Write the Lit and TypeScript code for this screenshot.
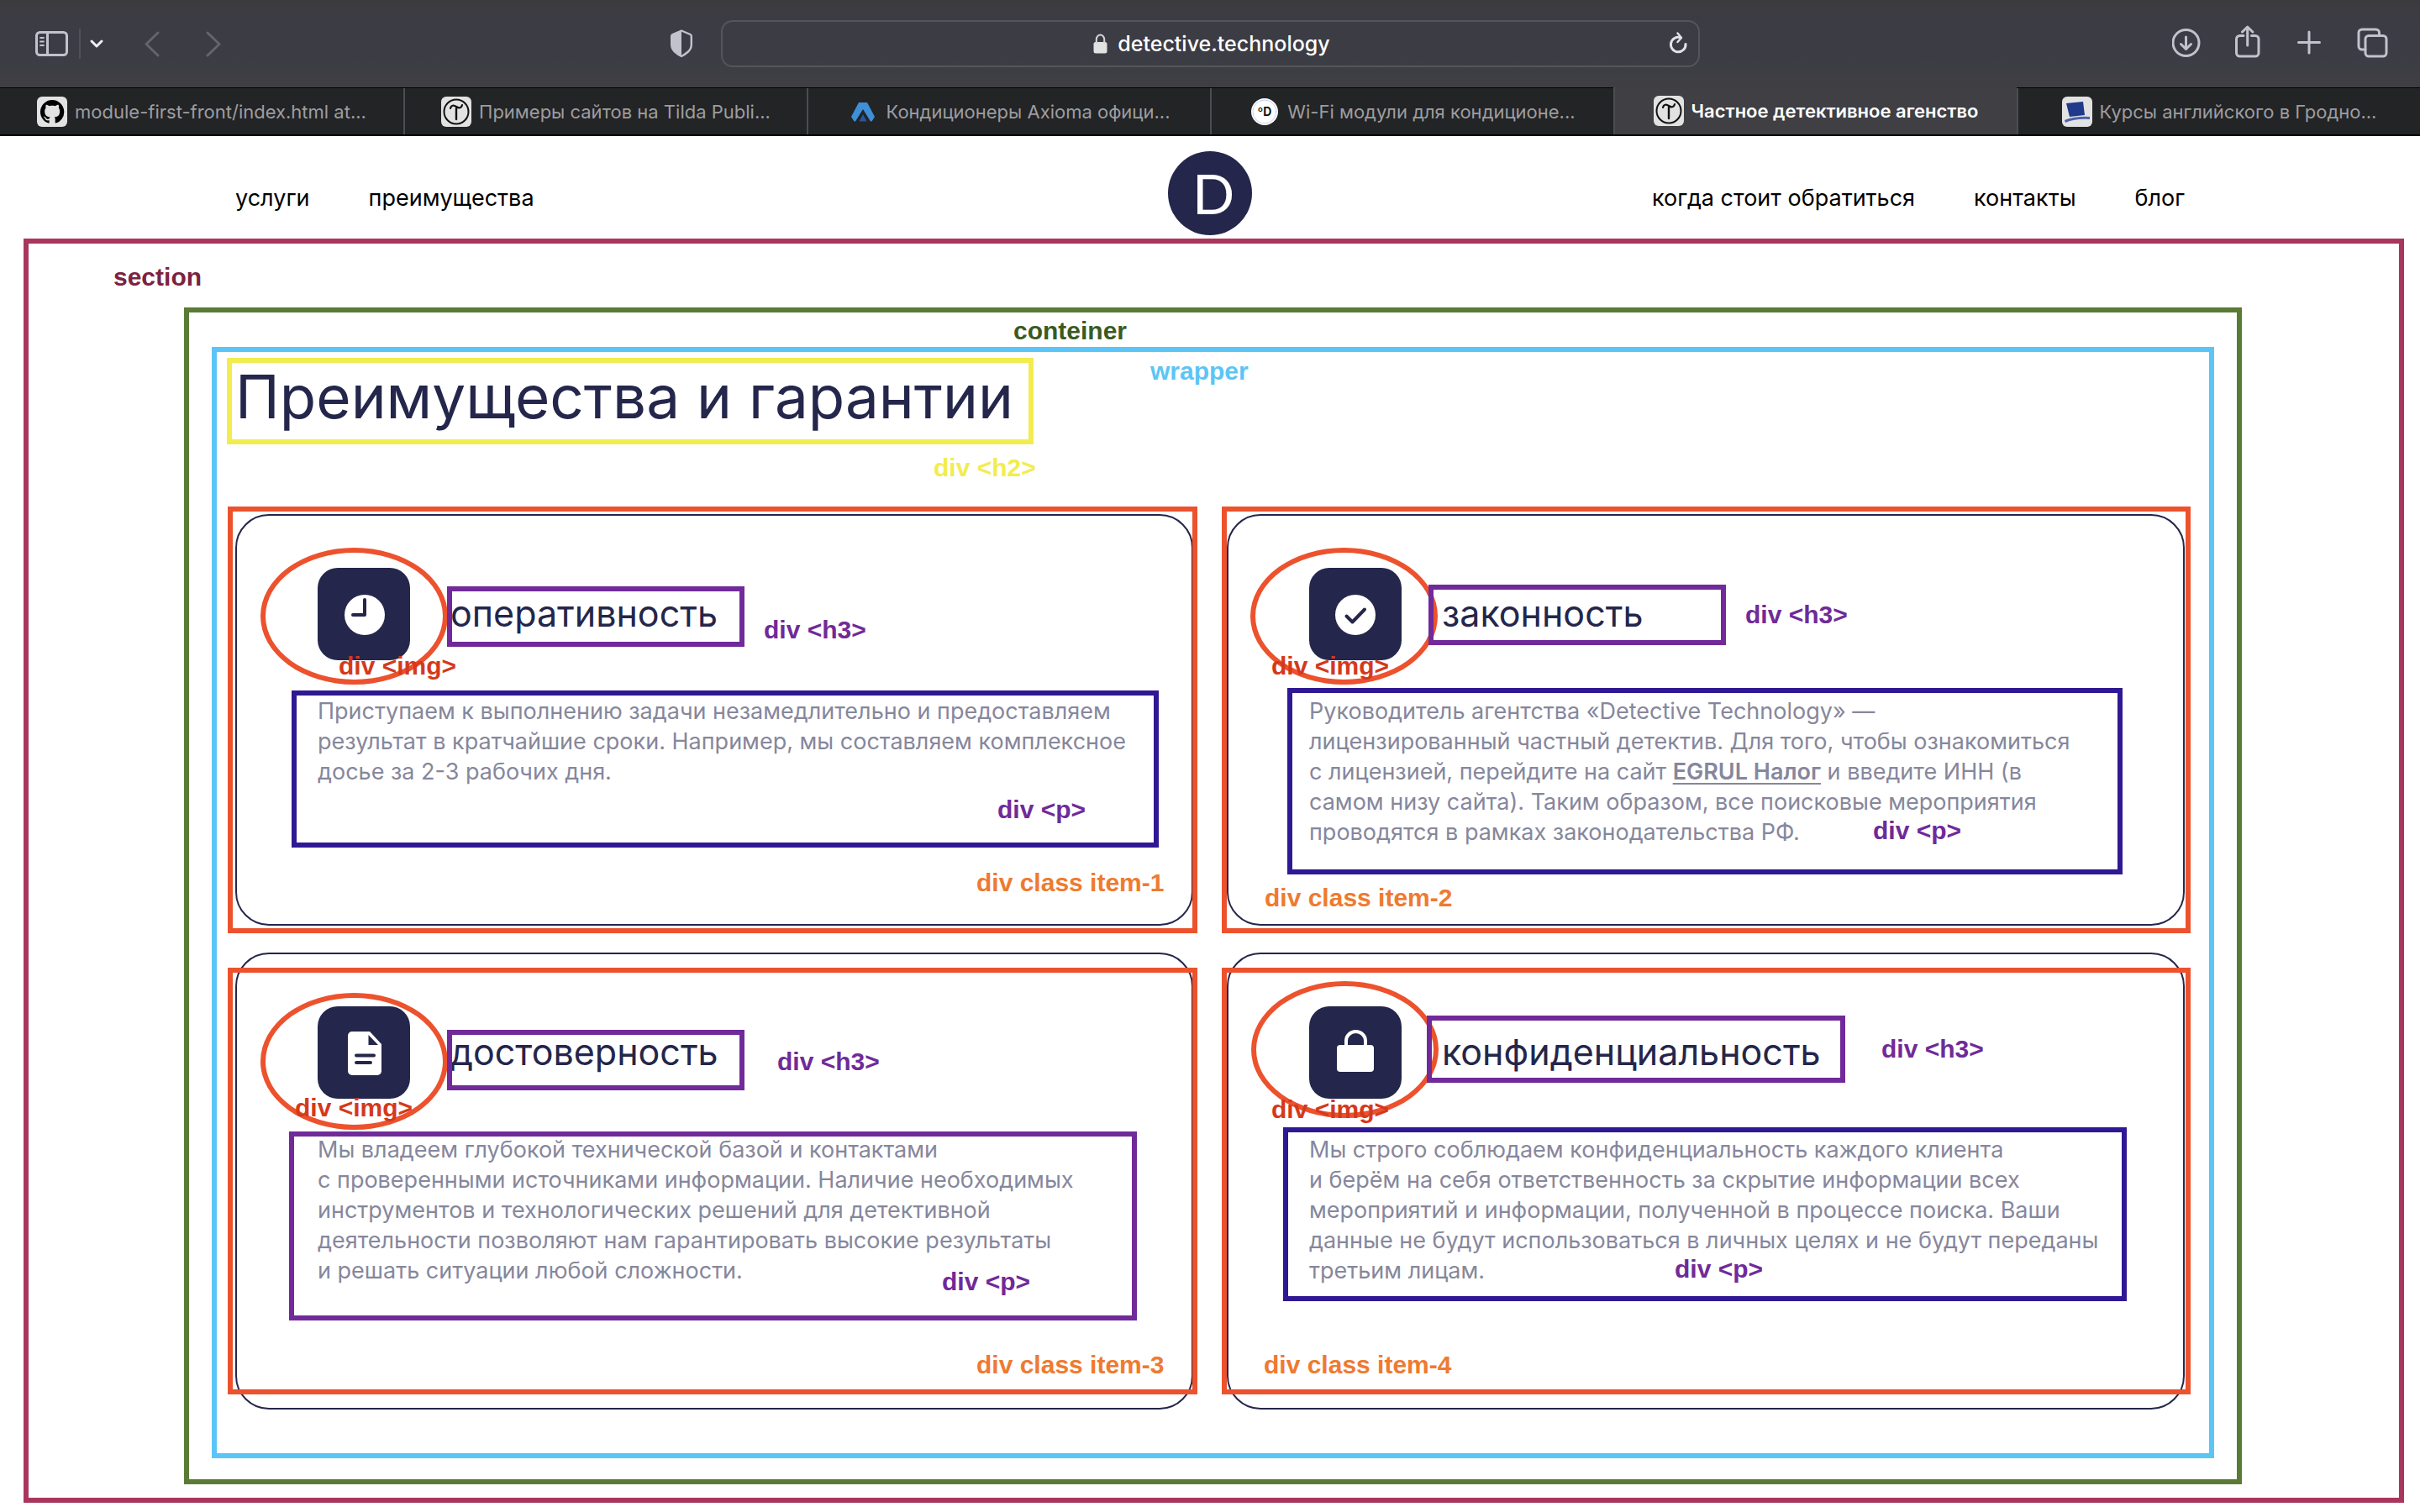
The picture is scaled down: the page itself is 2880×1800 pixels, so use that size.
import { LitElement, html, css, svg, TemplateResult } from "lit";
import { customElement, property } from "lit/decorators.js";

interface Advantage {
  id: number;
  title: string;
  icon: TemplateResult;
  lines: (string | TemplateResult)[];
}

const clockIcon = svg`
  <circle cx="56" cy="56" r="24" fill="#fff"/>
  <path d="M56 38V56H42" fill="none" stroke="#24264b" stroke-width="4" stroke-linecap="round" stroke-linejoin="round"/>`;

const checkIcon = svg`
  <circle cx="55" cy="56" r="24" fill="#fff"/>
  <path d="M44.500 57.500L51.500 64.500L66 49.500" fill="none" stroke="#24264b" stroke-width="4" stroke-linecap="round" stroke-linejoin="round"/>`;

const documentIcon = svg`
  <path d="M41 30H62L76 45V77a5 5 0 0 1-5 5H41a5 5 0 0 1-5-5V35a5 5 0 0 1 5-5z" fill="#fff"/>
  <path d="M60.500 34V46H72z" fill="#24264b"/>
  <path d="M46 58.500H67M46 67H63" stroke="#24264b" stroke-width="4" stroke-linecap="round"/>`;

const lockIcon = svg`
  <rect x="33" y="46" width="44" height="32" rx="4" fill="#fff"/>
  <path d="M44 48V41a11.500 11 0 0 1 23 0v7" fill="none" stroke="#fff" stroke-width="4"/>`;

const advantages: Advantage[] = [
  {
    id: 1,
    title: "оперативность",
    icon: clockIcon,
    lines: [
      "Приступаем к выполнению задачи незамедлительно и предоставляем",
      "результат в кратчайшие сроки. Например, мы составляем комплексное",
      "досье за 2-3 рабочих дня.",
    ],
  },
  {
    id: 2,
    title: "законность",
    icon: checkIcon,
    lines: [
      "Руководитель агентства «Detective Technology» —",
      "лицензированный частный детектив. Для того, чтобы ознакомиться",
      html`с лицензией, перейдите на сайт <a class="source" href="#egrul">EGRUL Налог</a> и введите ИНН (в`,
      "самом низу сайта). Таким образом, все поисковые мероприятия",
      "проводятся в рамках законодательства РФ.",
    ],
  },
  {
    id: 3,
    title: "достоверность",
    icon: documentIcon,
    lines: [
      "Мы владеем глубокой технической базой и контактами",
      "с проверенными источниками информации. Наличие необходимых",
      "инструментов и технологических решений для детективной",
      "деятельности позволяют нам гарантировать высокие результаты",
      "и решать ситуации любой сложности.",
    ],
  },
  {
    id: 4,
    title: "конфиденциальность",
    icon: lockIcon,
    lines: [
      "Мы строго соблюдаем конфиденциальность каждого клиента",
      "и берём на себя ответственность за скрытие информации всех",
      "мероприятий и информации, полученной в процессе поиска. Ваши",
      "данные не будут использоваться в личных целях и не будут переданы",
      "третьим лицам.",
    ],
  },
];

const tildaMark = svg`
  <rect width="36" height="36" rx="6" fill="#e2e2e2"/>
  <circle cx="18" cy="18" r="14.500" fill="none" stroke="#111" stroke-width="2"/>
  <path d="M11 14c1-4 4-4 7-2s6 2 7-2" fill="none" stroke="#111" stroke-width="2.200"/>
  <path d="M18 14V27" stroke="#111" stroke-width="2.400"/>`;

const githubMark = svg`
  <rect width="36" height="36" rx="6" fill="#e2e2e2"/>
  <path transform="translate(4 4) scale(1.770)" fill="#000" d="M8 0C3.580 0 0 3.580 0 8c0 3.540 2.290 6.530 5.470 7.590.4.070.55-.17.55-.38 0-.19-.01-.82-.01-1.490-2.010.37-2.530-.49-2.690-.94-.09-.23-.48-.94-.82-1.130-.28-.15-.68-.52-.01-.53.63-.01 1.080.58 1.230.82.72 1.210 1.870.87 2.330.66.07-.52.28-.87.51-1.070-1.780-.2-3.640-.89-3.640-3.950 0-.87.31-1.590.82-2.150-.08-.2-.36-1.020.08-2.120 0 0 .67-.21 2.200.82.64-.18 1.320-.27 2-.27s1.360.09 2 .27c1.530-1.040 2.200-.82 2.200-.82.44 1.100.16 1.920.08 2.120.51.56.82 1.270.82 2.150 0 3.070-1.870 3.750-3.650 3.950.29.25.54.73.54 1.480 0 1.070-.01 1.930-.01 2.200 0 .21.15.46.55.38A8.010 8.010 0 0 0 16 8c0-4.420-3.580-8-8-8z"/>`;

const axiomaMark = svg`
  <path d="M13 7H23L32 24L28.500 29.500H27L18 15L9 29.500H7.500L4 24z" fill="#3e8fd8"/>
  <path d="M18 21L22.500 29.500H13.500z" fill="#2a559f"/>`;

const degreeMark = svg`
  <circle cx="18" cy="18" r="16" fill="#fff"/>
  <circle cx="18" cy="18" r="14" fill="none" stroke="#bcd3ff" stroke-width="1"/>
  <text x="18" y="23" text-anchor="middle" font-family="Inter, sans-serif" font-weight="700" font-size="14" fill="#111">ºD</text>`;

const hatMark = svg`
  <rect width="36" height="36" rx="6" fill="#e2e2e2"/>
  <path d="M5 8L25 6L27 22L9 24z" fill="#20398a"/>
  <path d="M3 28Q16 23 33 24V27Q16 26 4 31z" fill="#4c62a6"/>`;

const tabs = [
  { title: "module-first-front/index.html at...", mark: githubMark, active: false },
  { title: "Примеры сайтов на Tilda Publi...", mark: tildaMark, active: false },
  { title: "Кондиционеры Axioma офици...", mark: axiomaMark, active: false },
  { title: "Wi-Fi модули для кондиционе...", mark: degreeMark, active: false },
  { title: "Частное детективное агенство", mark: tildaMark, active: true },
  { title: "Курсы английского в Гродно...", mark: hatMark, active: false },
];

@customElement("browser-chrome")
export class BrowserChrome extends LitElement {
  static styles = css`
    :host {
      display: block;
      font-family: Inter, "Liberation Sans", sans-serif;
    }
    button {
      display: flex;
      padding: 0;
      border: 0;
      background: none;
      color: #c3c2cc;
      font: inherit;
    }
    svg {
      display: block;
      fill: none;
      stroke: currentColor;
      stroke-width: 3;
      stroke-linecap: round;
      stroke-linejoin: round;
    }
    .toolbar {
      display: grid;
      grid-template-columns: 1fr minmax(0, 1165px) 1fr;
      align-items: center;
      height: 104px;
      background: linear-gradient(#3b3b3f, #3c3c45 30%, #3c3c45 65%, #3f3f43);
    }
    .side {
      display: flex;
      align-items: center;
    }
    .left {
      padding: 0 32px 0 40px;
    }
    .right {
      justify-content: flex-end;
      gap: 32px;
      padding-right: 37px;
    }
    .divider {
      width: 2px;
      height: 36px;
      margin: 0 10px 0 11px;
      background: #515158;
    }
    .history {
      display: flex;
      gap: 48px;
      margin-left: 46px;
      flex: 1;
    }
    .history button {
      color: #64646c;
    }
    .menu {
      color: #f0f0f4;
    }
    .address {
      display: flex;
      align-items: center;
      box-sizing: border-box;
      height: 56px;
      padding: 0 12px 0 40px;
      border: 2px solid #54545a;
      border-radius: 14px;
      color: #fff;
      font-size: 25px;
      font-weight: 500;
    }
    .host {
      display: flex;
      flex: 1;
      align-items: center;
      justify-content: center;
      gap: 12px;
    }
    .address button {
      color: #e2e2e6;
    }
    .tabs {
      display: grid;
      grid-template-columns: repeat(6, 1fr);
      height: 55px;
      border-top: 1px solid #000;
      border-bottom: 2px solid #000;
      background: #000;
    }
    .tab {
      justify-content: center;
      align-items: center;
      gap: 9px;
      min-width: 0;
      border-left: 2px solid #4c4c52;
      background: #232426;
      color: #9d9da0;
      font-size: 22px;
      white-space: nowrap;
    }
    .tab:first-child {
      border-left: 0;
    }
    .tab.active {
      margin-top: -1px;
      background: #3f3f44;
      color: #fff;
      font-weight: 600;
    }
    .mark {
      stroke: none;
    }
  `;

  render() {
    return html`
      <div class="toolbar">
        <div class="side left">
          <button aria-label="Sidebar">
            <svg width="43" height="36" viewBox="0 0 43 36">
              <rect x="3.500" y="4.500" width="36" height="27" rx="4"/>
              <path d="M16.500 5V31"/>
              <path d="M8 11H12M8 15.500H12M8 20H12" stroke-width="1.800"/>
            </svg>
          </button>
          <span class="divider"></span>
          <button class="menu" aria-label="Tab groups">
            <svg width="18" height="18" viewBox="0 0 18 18" stroke-width="3.500"><path d="M3 6L9 12L15 6"/></svg>
          </button>
          <div class="history">
            <button aria-label="Back">
              <svg width="24" height="36" viewBox="0 0 24 36"><path d="M18 5L4 18.500L18 32"/></svg>
            </button>
            <button aria-label="Forward">
              <svg width="24" height="36" viewBox="0 0 24 36"><path d="M5 5L19 18.500L5 32"/></svg>
            </button>
          </div>
          <button aria-label="Privacy report">
            <svg width="30" height="36" viewBox="0 0 30 36">
              <path d="M15 2.500L25.500 7Q26.800 7.800 26.800 9V19Q26.800 24 23 27.500Q19 31 15 33Q11 31 7 27.500Q3.200 24 3.200 19V9Q3.200 7.800 4.500 7z" stroke-width="2.400"/>
              <path d="M15 2.500V33Q11 31 7 27.500Q3.200 24 3.200 19V9Q3.200 7.800 4.500 7z" fill="currentColor" stroke="none"/>
            </svg>
          </button>
        </div>
        <div class="address">
          <span class="host">
            <svg width="17" height="24" viewBox="0 0 17 24">
              <rect x="0.500" y="10" width="16" height="13.500" rx="2.500" fill="#e2e2e2" stroke="none"/>
              <path d="M3.800 11V7a4.700 5.500 0 0 1 9.400 0v4" stroke="#d6d6da" stroke-width="2"/>
            </svg>
            <span>detective.technology</span>
          </span>
          <button aria-label="Reload">
            <svg width="24" height="28" viewBox="0 0 24 28" stroke-width="2.400">
              <path d="M21 14.500a8.800 8.800 0 1 1-6-7.800"/>
              <path d="M11.500 1.500L16 7L11.500 12" stroke-width="2.400"/>
            </svg>
          </button>
        </div>
        <div class="side right">
          <button aria-label="Downloads">
            <svg width="38" height="44" viewBox="0 0 38 44" stroke-width="2.600">
              <circle cx="16" cy="21" r="15.500" transform="translate(0.500 0)"/>
              <path d="M16.500 14V28M10.500 22.500L16.500 28.500L22.500 22.500"/>
            </svg>
          </button>
          <button aria-label="Share">
            <svg width="42" height="44" viewBox="0 0 42 44" stroke-width="2.600">
              <path d="M15 12.500H10.500a4 4 0 0 0-4 4V33a4 4 0 0 0 4 4H29a4 4 0 0 0 4-4V16.500a4 4 0 0 0-4-4H24.500"/>
              <path d="M19.700 24V2.500M13.500 8L19.700 2L25.900 8"/>
            </svg>
          </button>
          <button aria-label="New tab">
            <svg width="42" height="44" viewBox="0 0 42 44"><path d="M19 8V33M6.500 20.500H31.500"/></svg>
          </button>
          <button aria-label="Tab overview">
            <svg width="40" height="44" viewBox="0 0 40 44" stroke-width="2.600">
              <rect x="12" y="12.500" width="25" height="24.500" rx="4"/>
              <path d="M12 29H8a4 4 0 0 1-4-4V9a4 4 0 0 1 4-4H24.500a4 4 0 0 1 4 4V12"/>
            </svg>
          </button>
        </div>
      </div>
      <div class="tabs">
        ${tabs.map(
          (tab) => html`
            <button class="tab ${tab.active ? "active" : ""}">
              <svg class="mark" width="36" height="36" viewBox="0 0 36 36">${tab.mark}</svg>
              <span>${tab.title}</span>
            </button>
          `
        )}
      </div>
    `;
  }
}

@customElement("advantage-card")
export class AdvantageCard extends LitElement {
  @property({ attribute: false }) item!: Advantage;

  static styles = css`
    :host {
      display: block;
    }
    .item {
      position: relative;
      height: 100%;
    }
    .card {
      box-sizing: border-box;
      height: 100%;
      padding: 62px 40px 91px 96px;
      border: 2px solid #24264b;
      border-radius: 40px;
    }
    .item-3 .card,
    .item-4 .card {
      padding-bottom: 145px;
    }
    .head {
      display: flex;
      align-items: center;
      gap: 48px;
      margin-bottom: 43px;
    }
    .icon {
      display: block;
      flex: none;
      border-radius: 24px;
      background: #24264b;
    }
    h3 {
      margin: 0;
      padding-bottom: 2px;
      color: #24264b;
      font-size: 43px;
      font-weight: 400;
      line-height: 56px;
    }
    p {
      margin: 0;
      color: #86879c;
      font-size: 27px;
      line-height: 36px;
      white-space: nowrap;
    }
    .source {
      color: inherit;
      font-weight: 600;
      text-underline-offset: 4px;
    }

    .frame,
    .ring,
    .title-box,
    .text-box,
    .label {
      position: absolute;
      box-sizing: border-box;
      pointer-events: none;
    }
    .frame {
      top: -9px;
      left: -9px;
      right: -5px;
      height: 508px;
      border: 6px solid #ec522d;
    }
    .ring {
      top: 40px;
      left: 30px;
      width: 223px;
      height: 163px;
      border: 6px solid #ec522d;
      border-radius: 50%;
    }
    .title-box {
      width: 354px;
      height: 72px;
      border: 6px solid #702a99;
    }
    .text-box {
      border: 6px solid #2f1893;
    }
    .label {
      font-family: "Liberation Sans", Arial, sans-serif;
      font-size: 30px;
      font-weight: 700;
      line-height: 36px;
      white-space: nowrap;
    }
    .label-img {
      color: #d5391c;
    }
    .label-title,
    .label-text {
      color: #702a99;
    }
    .label-item {
      color: #ef7a30;
    }

    .item-1 .title-box { left: 252px; top: 86px; }
    .item-1 .text-box { left: 67px; top: 210px; width: 1032px; height: 187px; }
    .item-1 .label-img { left: 123px; top: 163px; }
    .item-1 .label-title { left: 629px; top: 120px; }
    .item-1 .label-text { left: 907px; top: 334px; }
    .item-1 .label-item { left: 882px; top: 421px; }

    .item-2 .frame { left: -6px; right: -7px; }
    .item-2 .ring { left: 28px; }
    .item-2 .title-box { left: 240px; top: 84px; }
    .item-2 .text-box { left: 72px; top: 207px; width: 994px; height: 222px; }
    .item-2 .label-img { left: 53px; top: 163px; }
    .item-2 .label-title { left: 617px; top: 102px; }
    .item-2 .label-text { left: 769px; top: 359px; }
    .item-2 .label-item { left: 45px; top: 439px; }

    .item-3 .frame { top: 18px; }
    .item-3 .ring { top: 48px; }
    .item-3 .title-box { left: 252px; top: 92px; }
    .item-3 .text-box { left: 64px; top: 213px; width: 1009px; height: 225px; border-color: #702a99; }
    .item-3 .label-img { left: 71px; top: 167px; }
    .item-3 .label-title { left: 645px; top: 112px; }
    .item-3 .label-text { left: 841px; top: 374px; }
    .item-3 .label-item { left: 882px; top: 473px; }

    .item-4 .frame { top: 18px; left: -6px; right: -7px; }
    .item-4 .ring { left: 29px; top: 34px; }
    .item-4 .title-box { left: 238px; top: 75px; width: 498px; height: 80px; }
    .item-4 .text-box { left: 67px; top: 208px; width: 1004px; height: 207px; }
    .item-4 .label-img { left: 53px; top: 169px; }
    .item-4 .label-title { left: 779px; top: 97px; }
    .item-4 .label-text { left: 533px; top: 359px; }
    .item-4 .label-item { left: 44px; top: 473px; }
  `;

  render() {
    const { id, title, icon, lines } = this.item;
    return html`
      <article class="item item-${id}">
        <div class="card">
          <div class="head">
            <svg class="icon" width="110" height="110" viewBox="0 0 110 110" aria-hidden="true">${icon}</svg>
            <h3>${title}</h3>
          </div>
          <p>${lines.map((line, i) => (i ? html`<br>${line}` : line))}</p>
        </div>
        <div class="frame"></div>
        <div class="ring"></div>
        <div class="title-box"></div>
        <div class="text-box"></div>
        <span class="label label-img">div &lt;img&gt;</span>
        <span class="label label-title">div &lt;h3&gt;</span>
        <span class="label label-text">div &lt;p&gt;</span>
        <span class="label label-item">div class item-${id}</span>
      </article>
    `;
  }
}

@customElement("app-root")
export class AppRoot extends LitElement {
  static styles = css`
    :host {
      display: block;
      background: #fff;
      font-family: Inter, "Liberation Sans", sans-serif;
    }
    .site-header {
      display: grid;
      grid-template-columns: 1fr auto 1fr;
      align-items: center;
      padding: 18px 280px 4px;
    }
    nav {
      display: flex;
      gap: 70px;
      padding-top: 12px;
      font-size: 27px;
      line-height: 36px;
    }
    nav a {
      color: #000;
      text-decoration: none;
      white-space: nowrap;
    }
    .nav-end {
      justify-content: flex-end;
    }
    .logo {
      display: flex;
      align-items: center;
      justify-content: center;
      width: 100px;
      height: 100px;
      padding-left: 8px;
      box-sizing: border-box;
      border-radius: 50%;
      background: #24264b;
      color: #fff;
      font-family: Lato, sans-serif;
      font-size: 66px;
      line-height: 96px;
      text-decoration: none;
    }
    .section,
    .container,
    .wrapper {
      position: relative;
    }
    .section {
      margin: 0 19px 11px 28px;
      padding: 76px 187px 16px 185px;
      border: 6px solid #a9365e;
    }
    .container {
      padding: 41px 27px 25px;
      border: 6px solid #5a7b35;
    }
    .wrapper {
      padding: 7px 29px 52px 12px;
      border: 6px solid #5bc5f7;
    }
    h2 {
      box-sizing: border-box;
      width: 960px;
      height: 103px;
      margin: 0 0 83px;
      padding-left: 4px;
      border: 6px solid #f3ec4e;
      color: #24264b;
      font-size: 71px;
      font-weight: 400;
      line-height: 80px;
      white-space: nowrap;
    }
    .grid {
      display: grid;
      grid-template-columns: 1fr 1fr;
      gap: 32px 40px;
      margin-left: 10px;
    }
    .label {
      position: absolute;
      font-family: "Liberation Sans", Arial, sans-serif;
      font-size: 30px;
      font-weight: 700;
      line-height: 36px;
      white-space: nowrap;
    }
    .label-section { left: 101px; top: 22px; color: #7c2240; }
    .label-container { left: 981px; top: 4px; color: #3b5a20; }
    .label-wrapper { left: 1111px; top: 5px; color: #5bc5f7; }
    .label-heading { left: 853px; top: 120px; color: #f3ec4e; }
  `;

  render() {
    return html`
      <browser-chrome></browser-chrome>
      <header class="site-header">
        <nav aria-label="Главное меню">
          <a href="#services">услуги</a>
          <a href="#advantages">преимущества</a>
        </nav>
        <a class="logo" href="#top">D</a>
        <nav class="nav-end" aria-label="Дополнительное меню">
          <a href="#when">когда стоит обратиться</a>
          <a href="#contacts">контакты</a>
          <a href="#blog">блог</a>
        </nav>
      </header>
      <section class="section" id="advantages">
        <span class="label label-section">section</span>
        <div class="container">
          <span class="label label-container">conteiner</span>
          <div class="wrapper">
            <span class="label label-wrapper">wrapper</span>
            <h2>Преимущества и гарантии</h2>
            <span class="label label-heading">div &lt;h2&gt;</span>
            <div class="grid">
              ${advantages.map((item) => html`<advantage-card .item=${item}></advantage-card>`)}
            </div>
          </div>
        </div>
      </section>
    `;
  }
}
